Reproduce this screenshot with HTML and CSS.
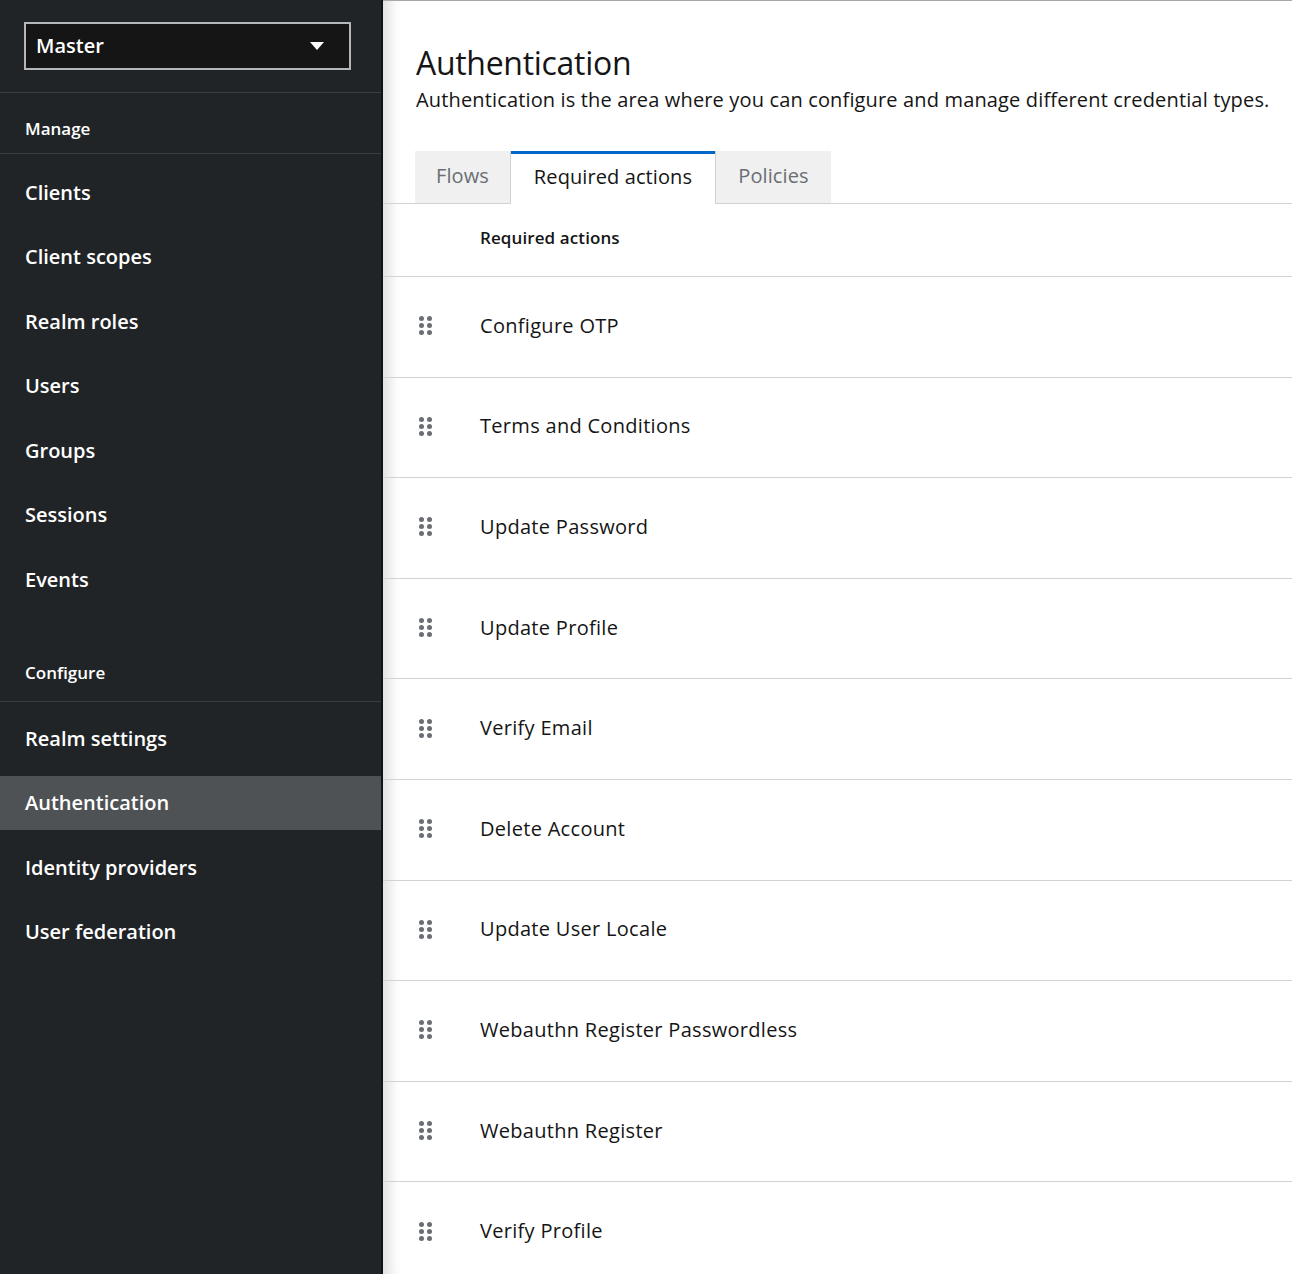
FILE: index.html
```html
<!DOCTYPE html>
<html lang="en">
<head>
<meta charset="utf-8">
<title>Authentication</title>
<link rel="stylesheet" href="styles.css">
</head>
<body>
<div class="page">
  <aside class="sidebar">
    <div class="realm-wrap">
      <button class="realm-select">
        <span>Master</span>
        <svg class="caret" width="14" height="9" viewBox="0 0 14 9"><path d="M0 0 H14 L7 8 Z" fill="#fff"/></svg>
      </button>
    </div>
    <div class="section-title first">Manage</div>
    <ul class="nav">
      <li class="nav-item">Clients</li>
      <li class="nav-item">Client scopes</li>
      <li class="nav-item">Realm roles</li>
      <li class="nav-item">Users</li>
      <li class="nav-item">Groups</li>
      <li class="nav-item">Sessions</li>
      <li class="nav-item">Events</li>
    </ul>
    <div class="section-title second">Configure</div>
    <ul class="nav nav-configure">
      <li class="nav-item">Realm settings</li>
      <li class="nav-item active">Authentication</li>
      <li class="nav-item">Identity providers</li>
      <li class="nav-item">User federation</li>
    </ul>
  </aside>
  <main class="main">
    <header class="page-header">
      <h1 class="title">Authentication</h1>
      <p class="desc">Authentication is the area where you can configure and manage different credential types.</p>
    </header>
    <div class="tabs">
      <div class="tab tab-flows">Flows</div>
      <div class="tab tab-active">Required actions</div>
      <div class="tab tab-policies">Policies</div>
    </div>
    <div class="table">
      <div class="thead">Required actions</div>
      <div class="row"><span class="drag"><i></i><i></i><i></i><i></i><i></i><i></i></span><span class="name">Configure OTP</span></div>
      <div class="row"><span class="drag"><i></i><i></i><i></i><i></i><i></i><i></i></span><span class="name">Terms and Conditions</span></div>
      <div class="row"><span class="drag"><i></i><i></i><i></i><i></i><i></i><i></i></span><span class="name">Update Password</span></div>
      <div class="row"><span class="drag"><i></i><i></i><i></i><i></i><i></i><i></i></span><span class="name">Update Profile</span></div>
      <div class="row"><span class="drag"><i></i><i></i><i></i><i></i><i></i><i></i></span><span class="name">Verify Email</span></div>
      <div class="row"><span class="drag"><i></i><i></i><i></i><i></i><i></i><i></i></span><span class="name">Delete Account</span></div>
      <div class="row"><span class="drag"><i></i><i></i><i></i><i></i><i></i><i></i></span><span class="name">Update User Locale</span></div>
      <div class="row"><span class="drag"><i></i><i></i><i></i><i></i><i></i><i></i></span><span class="name">Webauthn Register Passwordless</span></div>
      <div class="row"><span class="drag"><i></i><i></i><i></i><i></i><i></i><i></i></span><span class="name">Webauthn Register</span></div>
      <div class="row"><span class="drag"><i></i><i></i><i></i><i></i><i></i><i></i></span><span class="name">Verify Profile</span></div>
    </div>
  </main>
</div>
</body>
</html>
```

FILE: styles.css
```css
* { box-sizing: border-box; }
html, body { margin: 0; padding: 0; }
body {
  font-family: "Open Sans", "Noto Sans", "Liberation Sans", sans-serif;
  color: #151515;
  background: #fff;
  width: 1292px;
  height: 1274px;
  overflow: hidden;
}
.page {
  display: flex;
  height: 1274px;
}
.sidebar {
  width: 381px;
  flex: none;
  background: #212427;
  color: #fff;
  border-right: 2px solid #121314;
  box-sizing: content-box;
}
.realm-wrap {
  padding: 22px 30px 22px 24px;
}
.realm-select {
  width: 100%;
  height: 48px;
  background: #151515;
  border: 2px solid #b4b6b8;
  display: flex;
  align-items: center;
  justify-content: space-between;
  padding: 0 25px 2px 10px;
  color: #fff;
  font-family: inherit;
  font-size: 20px;
  font-weight: 600;
}
.caret { display: block; margin-top: 2px; }
.section-title {
  border-top: 1px solid #3a3d40;
  border-bottom: 1px solid #3a3d40;
  height: 62px;
  padding: 24px 0 0 25px;
  font-size: 17px;
  font-weight: 600;
  line-height: 24px;
}
.section-title.second {
  border-top: none;
  margin-top: 35px;
  height: 61px;
  padding-top: 20px;
}
.nav {
  list-style: none;
  margin: 0;
  padding: 11px 0 0 0;
  display: flex;
  flex-direction: column;
  gap: 10.5px;
}
.nav.nav-configure {
  padding-top: 9px;
}
.nav-item {
  height: 54px;
  display: flex;
  align-items: center;
  padding-left: 25px;
  font-size: 20px;
  font-weight: 600;
}
.nav-item.active {
  background: #4f5255;
}
.main {
  flex: 1;
  border-top: 1px solid #a8a8a8;
  box-shadow: inset 18px 0 14px -12px rgba(0,0,0,0.14);
  min-width: 0;
}
.page-header {
  padding: 43px 0 0 33px;
}
.title {
  margin: 0;
  font-size: 32px;
  font-weight: 400;
  line-height: 38px;
  letter-spacing: -0.3px;
}
.desc {
  margin: 3px 0 0 0;
  font-size: 20px;
  line-height: 30px;
  letter-spacing: 0.15px;
}
.tabs {
  margin-top: 36px;
  display: flex;
  padding-left: 32px;
  border-bottom: 1px solid #d2d2d2;
  height: 53px;
}
.tab {
  height: 53px;
  display: flex;
  align-items: center;
  justify-content: center;
  font-size: 20px;
  color: #6a6e73;
  background: #f0f0f0;
  letter-spacing: 0.1px;
  padding-bottom: 4px;
}
.tab-flows {
  width: 96px;
  border-right: 1px solid #d2d2d2;
  border-bottom: 1px solid #d2d2d2;
}
.tab-active {
  width: 204px;
  background: #fff;
  color: #151515;
  border-top: 3px solid #0066cc;
  margin-bottom: -1px;
  height: 54px;
  padding-bottom: 7px;
}
.tab-policies {
  width: 116px;
  border-left: 1px solid #d2d2d2;
  border-bottom: 1px solid #d2d2d2;
}
.thead {
  height: 73px;
  border-bottom: 1px solid #d2d2d2;
  padding: 0 0 6px 97px;
  display: flex;
  align-items: center;
  font-size: 17px;
  font-weight: 600;
  letter-spacing: 0.1px;
}
.row {
  height: 100.6px;
  border-bottom: 1px solid #d2d2d2;
  display: flex;
  align-items: center;
  padding-left: 36px;
  padding-bottom: 3px;
}
.drag {
  width: 14px;
  display: grid;
  grid-template-columns: 5px 5px;
  grid-auto-rows: 5px;
  column-gap: 3px;
  row-gap: 2px;
  margin-right: 47px;
  margin-top: 1px;
}
.drag i {
  display: block;
  width: 5px;
  height: 5px;
  border-radius: 50%;
  background: #6a6e73;
}
.name {
  font-size: 20px;
  letter-spacing: 0.3px;
}
```
